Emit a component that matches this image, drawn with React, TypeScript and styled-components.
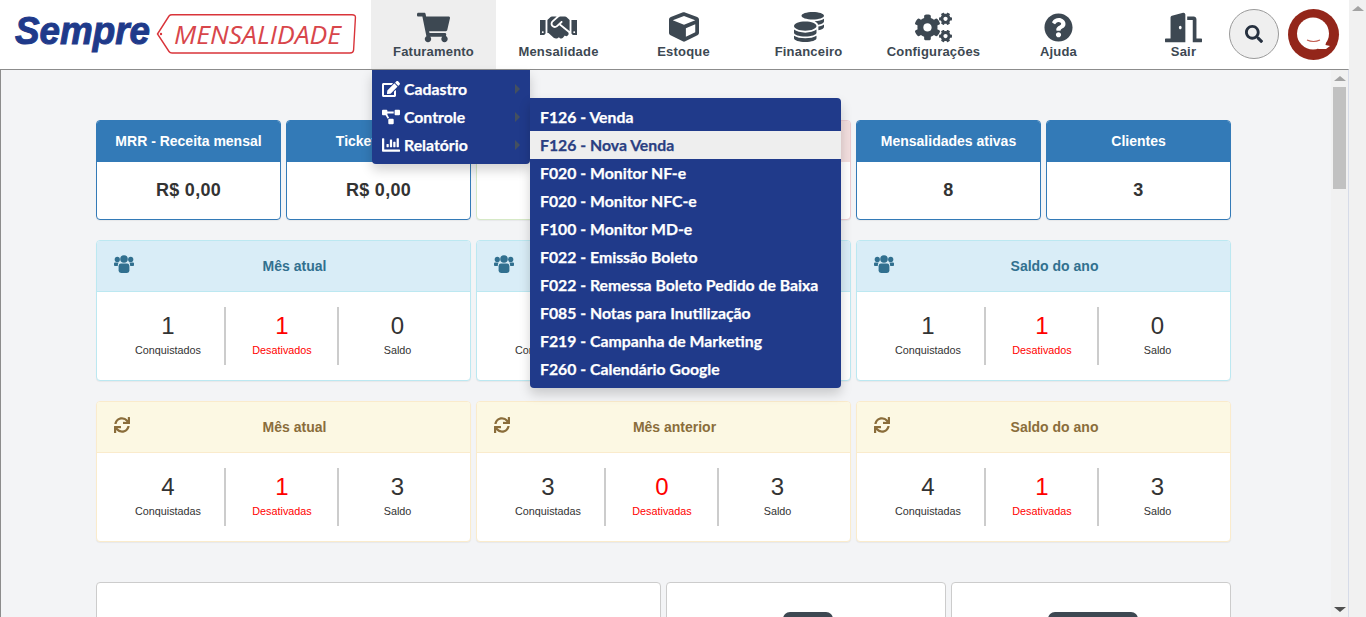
import React from "react";
import styled, { createGlobalStyle } from "styled-components";
import {
  FaShoppingCart,
  FaHandshake,
  FaCube,
  FaCoins,
  FaCogs,
  FaQuestionCircle,
  FaDoorOpen,
  FaSearch,
  FaEdit,
  FaProjectDiagram,
  FaChartBar,
  FaSync,
} from "react-icons/fa";

const GlobalStyle = createGlobalStyle`
  html, body {
    margin: 0;
    padding: 0;
    height: 100%;
    overflow: hidden;
    font-family: "Liberation Sans", Arial, sans-serif;
  }
  * {
    box-sizing: border-box;
  }
  svg {
    display: block;
  }
`;

const Page = styled.div`
  display: flex;
  width: 1366px;
  height: 617px;
  overflow: hidden;
  background: #fff;
`;

const Main = styled.div`
  flex: 1;
  min-width: 0;
  display: flex;
  flex-direction: column;
`;

const Header = styled.header`
  position: relative;
  z-index: 10;
  flex: 0 0 69px;
  display: flex;
  background: #fff;
`;

const LogoBox = styled.div`
  flex: 0 0 371px;
`;

const Nav = styled.nav`
  display: flex;
`;

const NavItem = styled.div<{ $active?: boolean }>`
  position: relative;
  width: 125px;
  height: 69px;
  display: flex;
  flex-direction: column;
  align-items: center;
  padding-top: 12px;
  background: ${({ $active }) => ($active ? "#eeeeee" : "transparent")};
  color: #3d4852;
`;

const NavIcon = styled.div`
  height: 30px;
  display: flex;
  align-items: center;
  justify-content: center;
`;

const NavLabel = styled.span`
  margin-top: 2px;
  font-size: 13px;
  line-height: 15px;
  font-weight: 700;
  letter-spacing: 0.2px;
  white-space: nowrap;
`;

const Tools = styled.div`
  display: flex;
  align-items: flex-start;
  gap: 9px;
  margin-left: -17px;
  padding-top: 9px;
`;

const SearchButton = styled.button`
  flex: 0 0 50px;
  width: 50px;
  height: 50px;
  padding: 0;
  display: flex;
  align-items: center;
  justify-content: center;
  border: 1px solid #9a9a9a;
  border-radius: 50%;
  background: #efefef;
  color: #26303f;
`;

const Dropdown = styled.div`
  position: absolute;
  top: 70px;
  left: 1px;
  width: 158px;
  padding: 5px 0;
  background: #203a8a;
  border-radius: 0 0 4px 4px;
  box-shadow: 0 6px 12px rgba(0, 0, 0, 0.175);
`;

const DropdownItem = styled.div`
  position: relative;
  height: 28px;
  display: flex;
  align-items: center;
  gap: 4px;
  padding-left: 10px;
  color: #fff;
  font-family: Lato, "Liberation Sans", sans-serif;
  font-size: 15.8px;
  font-weight: 700;
  -webkit-text-stroke: 0.25px currentColor;
  white-space: nowrap;
`;

const DropdownLabel = styled.span`
  position: relative;
  top: -1px;
`;

const DropdownIcon = styled.span`
  width: 18px;
  display: flex;
  justify-content: center;
`;

const Caret = styled.i`
  position: absolute;
  right: 10px;
  top: 9px;
  border-style: solid;
  border-width: 5px 0 5px 5px;
  border-color: transparent transparent transparent #44505f;
`;

const Submenu = styled.div`
  position: absolute;
  top: -5px;
  left: 100%;
  width: 311px;
  padding: 5px 0;
  background: #203a8a;
  border-radius: 0 4px 4px 4px;
  box-shadow: 0 6px 12px rgba(0, 0, 0, 0.175);
`;

const SubmenuItem = styled.div<{ $active?: boolean }>`
  height: 28px;
  display: flex;
  align-items: center;
  padding: 0 0 2px 10px;
  background: ${({ $active }) => ($active ? "#eeeeee" : "transparent")};
  color: ${({ $active }) => ($active ? "#2a3f82" : "#ffffff")};
`;

const Content = styled.div`
  flex: 1;
  min-height: 0;
  display: flex;
  border-top: 1px solid #8c8c8c;
  border-left: 1px solid #8c8c8c;
  border-right: 1px solid #d6dbe8;
  background: #f3f4f6;
`;

const Scroller = styled.main`
  flex: 1;
  min-width: 0;
  overflow: hidden;
  padding: 50px 0 0 95px;
`;

const Track = styled.div`
  flex: 0 0 17px;
  display: flex;
  flex-direction: column;
  align-items: center;
  background: #f1f1f1;
`;

const ArrowUp = styled.i`
  margin-top: 6px;
  border-style: solid;
  border-width: 0 6px 5px 6px;
  border-color: transparent transparent #a3a3a3 transparent;
`;

const ArrowDown = styled.i`
  margin-top: auto;
  margin-bottom: 5px;
  border-style: solid;
  border-width: 5px 6px 0 6px;
  border-color: #505050 transparent transparent transparent;
`;

const Thumb = styled.div`
  width: 13px;
  height: 102px;
  margin-top: 6px;
  background: #c1c1c1;
`;

const Grid = styled.div<{ $columns: string; $bottom: number }>`
  width: 1135px;
  display: grid;
  grid-template-columns: ${({ $columns }) => $columns};
  gap: 5px;
  margin-bottom: ${({ $bottom }) => $bottom}px;
`;

const tones = {
  primary: { border: "#337ab7", head: "#337ab7", text: "#ffffff" },
  success: { border: "#d6e9c6", head: "#dff0d8", text: "#3c763d" },
  danger: { border: "#ebccd1", head: "#f2dede", text: "#a94442" },
  info: { border: "#bce8f1", head: "#d9edf7", text: "#31708f" },
  warning: { border: "#faebcc", head: "#fcf8e3", text: "#8a6d3b" },
};

type Tone = keyof typeof tones;

const Panel = styled.section<{ $tone: Tone }>`
  background: #fff;
  border: 1px solid ${({ $tone }) => tones[$tone].border};
  border-radius: 4px;
  overflow: hidden;
  box-shadow: 0 1px 1px rgba(0, 0, 0, 0.05);
`;

const KpiHead = styled.div<{ $tone: Tone }>`
  height: 41px;
  display: flex;
  align-items: center;
  justify-content: center;
  padding-bottom: 2px;
  background: ${({ $tone }) => tones[$tone].head};
  color: ${({ $tone }) => tones[$tone].text};
  font-size: 14px;
  font-weight: 700;
`;

const KpiValue = styled.div`
  height: 57px;
  display: flex;
  align-items: center;
  justify-content: center;
  color: #333;
  font-size: 18px;
  font-weight: 700;
  letter-spacing: 0.3px;
`;

const StatHead = styled.div<{ $tone: Tone }>`
  height: 51px;
  display: flex;
  align-items: center;
  padding: 0 15px 1px 17px;
  background: ${({ $tone }) => tones[$tone].head};
  border-bottom: 1px solid ${({ $tone }) => tones[$tone].border};
  color: ${({ $tone }) => tones[$tone].text};
`;

const StatIcon = styled.span`
  width: 20px;
  height: 20px;
  margin-top: -3px;
  display: flex;
  align-items: center;
`;

const StatTitle = styled.h3`
  flex: 1;
  margin: 0;
  text-align: center;
  font-size: 14px;
  font-weight: 700;
`;

const StatBody = styled.div`
  display: grid;
  grid-template-columns: 115px 113px 1fr;
  padding: 15px 14px 15px;
`;

const StatCell = styled.div<{ $divider?: boolean; $red?: boolean }>`
  height: 58px;
  display: flex;
  flex-direction: column;
  align-items: center;
  padding-top: 5px;
  padding-left: ${({ $divider }) => ($divider ? "1px" : "0")};
  border-right: ${({ $divider }) => ($divider ? "2px solid #cccccc" : "0")};
  color: ${({ $red }) => ($red ? "#ff0000" : "#333333")};
`;

const StatNumber = styled.span`
  font-size: 24px;
  line-height: 27px;
`;

const StatCaption = styled.span`
  margin-top: 5px;
  font-size: 10.8px;
  line-height: 13px;
  white-space: nowrap;
`;

const ChartPanel = styled.section`
  height: 200px;
  display: flex;
  justify-content: center;
  padding: 29px 0 0 4px;
  background: #fff;
  border: 1px solid #cccccc;
  border-radius: 4px;
`;

const ChartBadge = styled.div<{ $width: number }>`
  width: ${({ $width }) => $width}px;
  height: 30px;
  background: #3d4852;
  border-radius: 7px;
`;

function Logo() {
  return (
    <svg width="371" height="69" viewBox="0 0 371 69">
      <text
        x="15"
        y="43.5"
        textLength="135"
        lengthAdjust="spacingAndGlyphs"
        fontFamily="'Liberation Sans', sans-serif"
        fontSize="38"
        fontStyle="italic"
        fontWeight="700"
        fill="#1f3a8a"
        stroke="#1f3a8a"
        strokeWidth="1"
      >
        Sempre
      </text>
      <path
        d="M157.5 34 L169 16 Q170 14.8 172 14.8 L352 14.8 Q355.8 14.8 355.4 18 L353.6 50 Q353.4 53 350 53 L172 53 Q170 53 169 51.5 Z"
        fill="none"
        stroke="#d9343a"
        strokeWidth="1.4"
      />
      <circle cx="161" cy="34" r="1.2" fill="#d9343a" />
      <text
        x="174"
        y="43.5"
        textLength="167"
        lengthAdjust="spacingAndGlyphs"
        fontFamily="'Open Sans', sans-serif"
        fontSize="26"
        fontStyle="italic"
        fontWeight="400"
        fill="#d8464b"
      >
        MENSALIDADE
      </text>
    </svg>
  );
}

function Avatar() {
  return (
    <svg width="52" height="52" viewBox="0 0 52 52">
      <circle cx="25.5" cy="25.5" r="25.5" fill="#93261a" />
      <circle cx="25" cy="24.5" r="16" fill="#fff" />
      <path d="M33 32 L38 33 L37.5 36 L42 37 L38 40 L30 40 Z" fill="#fff" />
      <path d="M19 31 Q25.5 34 32 31" fill="none" stroke="#c05a4e" strokeWidth="1.2" />
    </svg>
  );
}

function UsersIcon() {
  return (
    <svg width="20" height="18" viewBox="0 0 20 18" fill="currentColor">
      <circle cx="3.3" cy="4.4" r="2.6" />
      <circle cx="16.7" cy="4.4" r="2.6" />
      <circle cx="10" cy="4" r="3.8" />
      <path d="M0 8.4 Q0 7.6 1 7.6 L4.6 7.6 Q3.8 9 3.8 11 L0.8 11 Q0 11 0 10 Z" />
      <path d="M20 8.4 Q20 7.6 19 7.6 L15.4 7.6 Q16.2 9 16.2 11 L19.2 11 Q20 11 20 10 Z" />
      <path d="M7 8.6 L13 8.6 Q15.4 8.6 15.4 11.5 L15.4 15.6 Q15.4 18 13 18 L7 18 Q4.6 18 4.6 15.6 L4.6 11.5 Q4.6 8.6 7 8.6 Z" />
    </svg>
  );
}

const navItems = [
  { label: "Faturamento", icon: <FaShoppingCart size={33} /> },
  { label: "Mensalidade", icon: <FaHandshake size={37} /> },
  { label: "Estoque", icon: <FaCube size={30} /> },
  { label: "Financeiro", icon: <FaCoins size={30} /> },
  { label: "Configurações", icon: <FaCogs size={37} /> },
  { label: "Ajuda", icon: <FaQuestionCircle size={29} /> },
  { label: "Sair", icon: <FaDoorOpen size={37} /> },
];

const submenu = [
  "F126 - Venda",
  "F126 - Nova Venda",
  "F020 - Monitor NF-e",
  "F020 - Monitor NFC-e",
  "F100 - Monitor MD-e",
  "F022 - Emissão Boleto",
  "F022 - Remessa Boleto Pedido de Baixa",
  "F085 - Notas para Inutilização",
  "F219 - Campanha de Marketing",
  "F260 - Calendário Google",
];

const kpis: { title: string; value: string; tone: Tone }[] = [
  { title: "MRR - Receita mensal", value: "R$ 0,00", tone: "primary" },
  { title: "Ticket médio", value: "R$ 0,00", tone: "primary" },
  { title: "", value: "", tone: "success" },
  { title: "", value: "", tone: "danger" },
  { title: "Mensalidades ativas", value: "8", tone: "primary" },
  { title: "Clientes", value: "3", tone: "primary" },
];

function StatPanel(props: {
  tone: Tone;
  title: string;
  icon: React.ReactNode;
  values: number[];
  suffix: string;
}) {
  const { tone, title, icon, values, suffix } = props;
  return (
    <Panel $tone={tone}>
      <StatHead $tone={tone}>
        <StatIcon>{icon}</StatIcon>
        <StatTitle>{title}</StatTitle>
      </StatHead>
      <StatBody>
        <StatCell $divider>
          <StatNumber>{values[0]}</StatNumber>
          <StatCaption>Conquistad{suffix}</StatCaption>
        </StatCell>
        <StatCell $divider $red>
          <StatNumber>{values[1]}</StatNumber>
          <StatCaption>Desativad{suffix}</StatCaption>
        </StatCell>
        <StatCell>
          <StatNumber>{values[2]}</StatNumber>
          <StatCaption>Saldo</StatCaption>
        </StatCell>
      </StatBody>
    </Panel>
  );
}

export default function App() {
  return (
    <Page>
      <GlobalStyle />
      <Main>
        <Header>
          <LogoBox>
            <Logo />
          </LogoBox>
          <Nav>
            {navItems.map((item, index) => (
              <NavItem key={item.label} $active={index === 0}>
                <NavIcon>{item.icon}</NavIcon>
                <NavLabel>{item.label}</NavLabel>
                {index === 0 && (
                  <Dropdown>
                    <DropdownItem>
                      <DropdownIcon>
                        <FaEdit size={18} />
                      </DropdownIcon>
                      <DropdownLabel>Cadastro</DropdownLabel>
                      <Caret />
                    </DropdownItem>
                    <DropdownItem>
                      <DropdownIcon>
                        <FaProjectDiagram size={18} />
                      </DropdownIcon>
                      <DropdownLabel>Controle</DropdownLabel>
                      <Caret />
                      <Submenu>
                        {submenu.map((entry, i) => (
                          <SubmenuItem key={entry} $active={i === 1}>
                            {entry}
                          </SubmenuItem>
                        ))}
                      </Submenu>
                    </DropdownItem>
                    <DropdownItem>
                      <DropdownIcon>
                        <FaChartBar size={18} />
                      </DropdownIcon>
                      <DropdownLabel>Relatório</DropdownLabel>
                      <Caret />
                    </DropdownItem>
                  </Dropdown>
                )}
              </NavItem>
            ))}
          </Nav>
          <Tools>
            <SearchButton aria-label="Buscar">
              <FaSearch size={18} />
            </SearchButton>
            <Avatar />
          </Tools>
        </Header>
        <Content>
          <Scroller>
            <Grid $columns="repeat(6, 185px)" $bottom={20}>
              {kpis.map((kpi, i) => (
                <Panel key={i} $tone={kpi.tone}>
                  <KpiHead $tone={kpi.tone}>{kpi.title}</KpiHead>
                  <KpiValue>{kpi.value}</KpiValue>
                </Panel>
              ))}
            </Grid>
            <Grid $columns="repeat(3, 375px)" $bottom={20}>
              <StatPanel tone="info" title="Mês atual" icon={<UsersIcon />} values={[1, 1, 0]} suffix="os" />
              <StatPanel tone="info" title="Mês anterior" icon={<UsersIcon />} values={[0, 0, 0]} suffix="os" />
              <StatPanel tone="info" title="Saldo do ano" icon={<UsersIcon />} values={[1, 1, 0]} suffix="os" />
            </Grid>
            <Grid $columns="repeat(3, 375px)" $bottom={40}>
              <StatPanel tone="warning" title="Mês atual" icon={<FaSync size={16} />} values={[4, 1, 3]} suffix="as" />
              <StatPanel tone="warning" title="Mês anterior" icon={<FaSync size={16} />} values={[3, 0, 3]} suffix="as" />
              <StatPanel tone="warning" title="Saldo do ano" icon={<FaSync size={16} />} values={[4, 1, 3]} suffix="as" />
            </Grid>
            <Grid $columns="565px 280px 280px" $bottom={0}>
              <ChartPanel />
              <ChartPanel>
                <ChartBadge $width={50} />
              </ChartPanel>
              <ChartPanel>
                <ChartBadge $width={90} />
              </ChartPanel>
            </Grid>
          </Scroller>
          <Track>
            <ArrowUp />
            <Thumb />
            <ArrowDown />
          </Track>
        </Content>
      </Main>
      <Track>
        <ArrowUp />
      </Track>
    </Page>
  );
}
